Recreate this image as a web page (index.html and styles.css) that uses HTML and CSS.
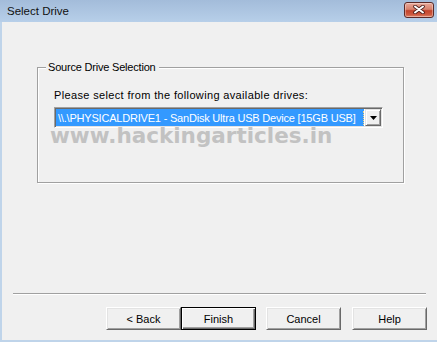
FILE: index.html
```html
<!DOCTYPE html>
<html>
<head>
<meta charset="utf-8">
<link rel="stylesheet" href="styles.css">
</head>
<body>
<div class="window">
  <div class="titlebar">
    <span class="title">Select Drive</span>
    <span class="close">
      <svg width="12" height="9" viewBox="0 0 12 9">
        <path d="M2 1.5 L10 7.5 M10 1.5 L2 7.5" stroke="#4a1e1a" stroke-width="3.6" stroke-linecap="round"/>
        <path d="M2 1.5 L10 7.5 M10 1.5 L2 7.5" stroke="#ffffff" stroke-width="2" stroke-linecap="round"/>
      </svg>
    </span>
  </div>
  <div class="content">
    <div class="group">
      <div class="group-label">Source Drive Selection</div>
      <div class="prompt">Please select from the following available drives:</div>
      <div class="combo">
        <div class="combo-value"><span class="focus">\\.\PHYSICALDRIVE1 - SanDisk Ultra USB Device [15GB USB]</span></div>
        <div class="combo-arrow">
          <svg width="7" height="4" viewBox="0 0 7 4"><path d="M0 0 H7 L3.5 4 Z" fill="#000"/></svg>
        </div>
      </div>
      <div class="watermark">www.hackingarticles.in</div>
    </div>
    <div class="separator"></div>
    <div class="buttons">
      <button class="btn">&lt; Back</button>
      <button class="btn default">Finish</button>
      <button class="btn gap">Cancel</button>
      <button class="btn gap help">Help</button>
    </div>
  </div>
</div>
</body>
</html>
```
FILE: styles.css
```css
* { box-sizing: border-box; }
html, body { margin: 0; padding: 0; }
body {
  width: 437px;
  height: 342px;
  overflow: hidden;
  font-family: "Liberation Sans", Arial, sans-serif;
  font-size: 11px;
  color: #000;
  background: #f0f0f0;
}
.window {
  display: flex;
  flex-direction: column;
  width: 437px;
  height: 342px;
}
.titlebar {
  height: 22px;
  flex: none;
  display: flex;
  align-items: center;
  justify-content: space-between;
  padding: 0 3px 0 7px;
  background: linear-gradient(#a3bcda, #b7cfe9);
}
.title {
  font-size: 11.5px;
  color: #111;
  margin-top: -1px;
}
.close {
  width: 30px;
  height: 16px;
  margin-top: -3px;
  border: 1px solid #5c2a27;
  border-radius: 3px;
  background: linear-gradient(#e9a99a 0%, #d7816c 45%, #c2432b 55%, #cf5c42 85%, #e08c73 100%);
  box-shadow: inset 0 0 0 1px rgba(255,255,255,0.35);
  display: flex;
  align-items: center;
  justify-content: center;
}
.close svg { display: block; }
.content {
  flex: 1;
  display: flex;
  flex-direction: column;
  background: #f0f0f0;
  border-left: 2px solid #bfd4ea;
  border-bottom: 2px solid #bfd4ea;
  padding-top: 45px;
}
.group {
  margin-left: 35px;
  width: 367px;
  height: 116px;
  border: 1px solid #a0a0a0;
  box-shadow: 1px 1px 0 #fff, inset 1px 1px 0 #fff;
  padding-left: 16px;
}
.group-label {
  display: table;
  margin: -7px 0 0 -8px;
  padding: 0 3px 0 2px;
  line-height: 13px;
  letter-spacing: -0.2px;
  background: #f0f0f0;
}
.prompt {
  margin-top: 15px;
  line-height: 13px;
  letter-spacing: 0.35px;
}
.combo {
  margin-top: 5px;
  width: 329px;
  height: 21px;
  display: flex;
  align-items: stretch;
  gap: 1px;
  background: #fff;
  border: 1px solid;
  border-color: #a0a0a0 #fff #fff #a0a0a0;
  box-shadow: inset 1px 1px 0 #696969, inset -1px -1px 0 #e3e3e3;
  padding: 1px;
}
.combo-value {
  flex: 1;
  background: #3399ff;
  color: #fff;
  display: flex;
  align-items: center;
  padding: 0 0 0 1px;
  white-space: nowrap;
  overflow: hidden;
}
.focus {
  flex: 1;
  line-height: 14px;
  padding-left: 1px;
  letter-spacing: -0.2px;
  border: 1px dotted #f5d78a;
  border-width: 0 1px 0 0;
}
.combo-arrow {
  width: 16px;
  flex: none;
  display: flex;
  align-items: center;
  justify-content: center;
  background: #f0f0f0;
  border: 1px solid;
  border-color: #e3e3e3 #696969 #696969 #e3e3e3;
  box-shadow: inset 1px 1px 0 #fff, inset -1px -1px 0 #a0a0a0;
}
.combo-arrow svg { display: block; }
.watermark {
  margin: 0 0 0 -4px;
  font-family: "DejaVu Sans", Verdana, sans-serif;
  font-size: 21.5px;
  font-weight: bold;
  line-height: 16px;
  color: #c2c2c2;
  white-space: nowrap;
}
.separator {
  margin: auto 0 0 11px;
  width: 413px;
  height: 2px;
  border-top: 1px solid #a0a0a0;
  border-bottom: 1px solid #fff;
}
.buttons {
  display: flex;
  justify-content: flex-end;
  padding: 12px 10px 10px 0;
}
.btn {
  width: 75px;
  height: 23px;
  margin: 0;
  padding: 0;
  font-family: "Liberation Sans", Arial, sans-serif;
  font-size: 11px;
  color: #000;
  background: #f0f0f0;
  border: 1px solid;
  border-color: #fff #696969 #696969 #fff;
  box-shadow: inset 1px 1px 0 #e3e3e3, inset -1px -1px 0 #a0a0a0;
  border-radius: 0;
}
.btn.default {
  border: 1px solid #000;
  box-shadow: inset 1px 1px 0 #fff, inset -1px -1px 0 #696969, inset -2px -2px 0 #a0a0a0;
}
.btn.gap { margin-left: 10px; }
.btn.help { margin-left: 11px; }
```
